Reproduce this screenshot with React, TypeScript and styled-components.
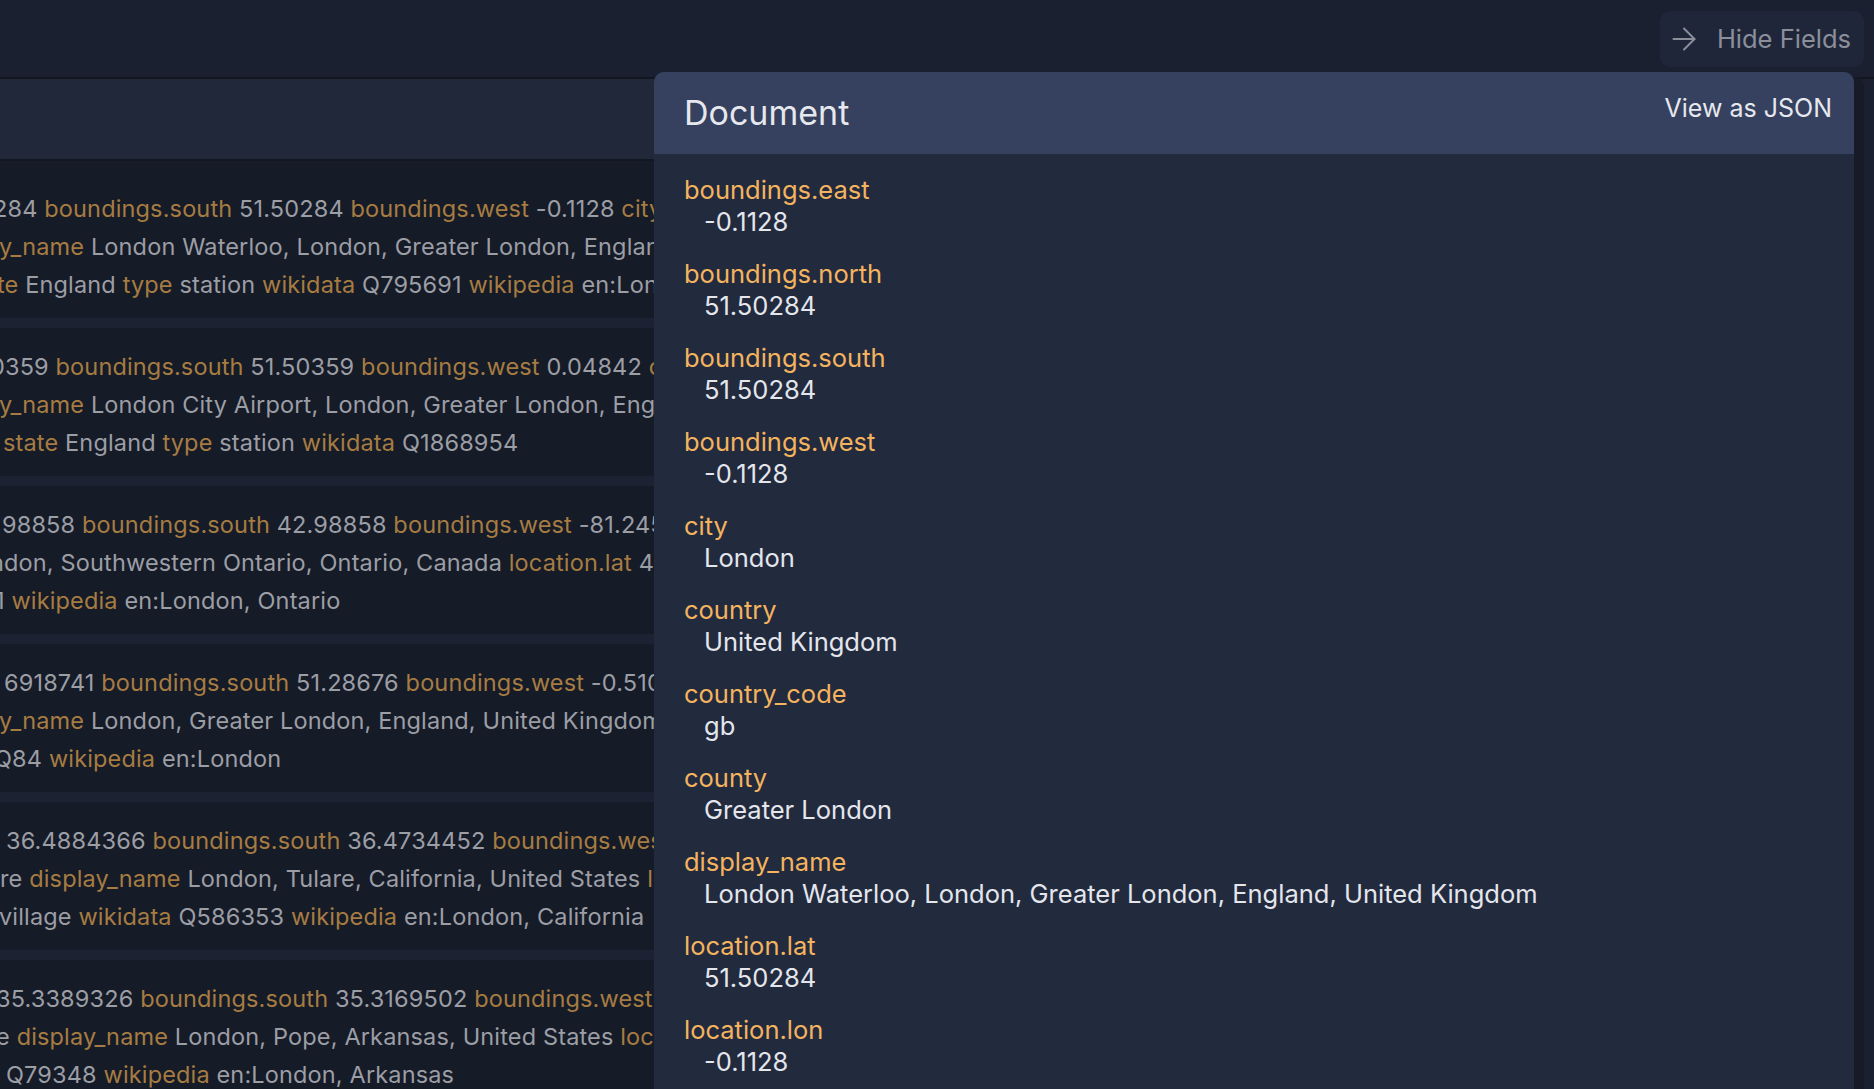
import React from 'react';
import styled, {createGlobalStyle} from 'styled-components';
import {ArrowRight} from 'lucide-react';

const GlobalStyle = createGlobalStyle`
    html, body {
        margin: 0;
        padding: 0;
        background: #1b2030;
        font-family: Inter, "Noto Sans", sans-serif;
        overflow: hidden;
    }
`;

const Page = styled.div`
    position: relative;
    display: flex;
    flex-direction: column;
    height: 100vh;
    overflow: hidden;
`;

const TopBar = styled.div`
    display: flex;
    align-items: center;
    justify-content: flex-end;
    height: 77px;
    padding-right: 10px;
    background: #1b2030;
    border-bottom: 2px solid #12161f;
    flex-shrink: 0;
`;

const HideButton = styled.button`
    display: flex;
    align-items: center;
    gap: 15px;
    height: 56px;
    padding: 0 13px 0 6px;
    background: #20263a;
    border: none;
    border-radius: 10px;
    color: #8b8f9a;
    font-family: inherit;
    font-size: 25.5px;
    cursor: pointer;
`;

const Results = styled.div`
    flex: 1;
    display: flex;
    flex-direction: column;
    min-height: 0;
    margin-right: 20px;
`;

const ResultsHeader = styled.div`
    height: 80px;
    background: #212839;
    border-bottom: 2px solid #131723;
    flex-shrink: 0;
`;

const List = styled.div`
    padding-top: 9px;
    background: #161b28;
`;

const Row = styled.div`
    padding: 20px 0 14px;
    border-bottom: 10px solid #1d2232;
    font-size: 23.5px;
    line-height: 38px;
    letter-spacing: 0.15px;
`;

const Line = styled.div<{$shift: number}>`
    white-space: nowrap;
    overflow: hidden;
    margin-left: ${p => p.$shift}px;
    color: #9c9ea5;
`;

const DimKey = styled.span`
    color: #a67c42;
`;

const Drawer = styled.aside`
    position: absolute;
    top: 72px;
    left: 654px;
    right: 20px;
    bottom: 0;
    display: flex;
    flex-direction: column;
    background: #222a3e;
    border-radius: 10px 10px 0 0;
    box-shadow: 10px 5px 0 #171b28;
`;

const DrawerHeader = styled.div`
    display: flex;
    align-items: flex-start;
    justify-content: space-between;
    flex-shrink: 0;
    height: 82px;
    box-sizing: border-box;
    padding: 19px 22px 0 30px;
    background: #35415f;
    border-radius: 10px 10px 0 0;
`;

const Title = styled.h2`
    margin: 0;
    font-size: 34px;
    font-weight: 400;
    line-height: 44px;
    color: #e6e8ee;
`;

const JsonLink = styled.a`
    margin-top: 1px;
    font-size: 25px;
    line-height: 32px;
    color: #e6e8ee;
    cursor: pointer;
`;

const DrawerBody = styled.div`
    display: flex;
    flex-direction: column;
    gap: 20px;
    padding: 20px 30px;
    overflow: hidden;
`;

const Field = styled.div`
    font-size: 25.5px;
    line-height: 32px;
    flex-shrink: 0;
`;

const FieldKey = styled.div`
    color: #f4b35f;
`;

const FieldValue = styled.div`
    padding-left: 20px;
    color: #e4e6ec;
`;

// keys in braces are highlighted; the number is how far the line is scrolled off the left edge
const rows: [string, number][][] = [
    [
        ['284 {boundings.south} 51.50284 {boundings.west} -0.1128 {city} London', -7],
        ['{y_name} London Waterloo, London, Greater London, England, United Kingdom', -1],
        ['{te} England {type} station {wikidata} Q795691 {wikipedia} en:London Waterloo station', -3],
    ],
    [
        ['0359 {boundings.south} 51.50359 {boundings.west} 0.04842 {city} London', -10],
        ['{y_name} London City Airport, London, Greater London, England, United Kingdom', -1],
        ['{state} England {type} station {wikidata} Q1868954', 3],
    ],
    [
        ['98858 {boundings.south} 42.98858 {boundings.west} -81.2452 {city} London', 2],
        ['ndon, Southwestern Ontario, Ontario, Canada {location.lat} 42.98858', -10],
        ['1 {wikipedia} en:London, Ontario', -5],
    ],
    [
        ['6918741 {boundings.south} 51.28676 {boundings.west} -0.5103751 {city} London', 4],
        ['{y_name} London, Greater London, England, United Kingdom', -1],
        ['Q84 {wikipedia} en:London', -6],
    ],
    [
        ['36.4884366 {boundings.south} 36.4734452 {boundings.west} -119.4540', 6],
        ['re {display_name} London, Tulare, California, United States {location.lat}', 0],
        ['village {wikidata} Q586353 {wikipedia} en:London, California', -1],
    ],
    [
        ['35.3389326 {boundings.south} 35.3169502 {boundings.west} -93.2631', -4],
        ['e {display_name} London, Pope, Arkansas, United States {location.lat}', -4],
        ['Q79348 {wikipedia} en:London, Arkansas', 6],
    ],
];

const fields: [string, string][] = [
    ['boundings.east', '-0.1128'],
    ['boundings.north', '51.50284'],
    ['boundings.south', '51.50284'],
    ['boundings.west', '-0.1128'],
    ['city', 'London'],
    ['country', 'United Kingdom'],
    ['country_code', 'gb'],
    ['county', 'Greater London'],
    ['display_name', 'London Waterloo, London, Greater London, England, United Kingdom'],
    ['location.lat', '51.50284'],
    ['location.lon', '-0.1128'],
    ['postcode', 'SE1 8SW'],
    ['state', 'England'],
    ['type', 'station'],
];

const renderLine = (text: string) =>
    text.split(/(\{[^}]+\})/).map((part, i) =>
        part.startsWith('{')
            ? <DimKey key={i}>{part.slice(1, -1)}</DimKey>
            : <React.Fragment key={i}>{part}</React.Fragment>
    );

export default function App() {
    return (
        <Page>
            <GlobalStyle/>
            <TopBar>
                <HideButton>
                    <ArrowRight size={36} strokeWidth={1.3}/>
                    Hide Fields
                </HideButton>
            </TopBar>
            <Results>
                <ResultsHeader/>
                <List>
                    {rows.map((lines, i) => (
                        <Row key={i}>
                            {lines.map(([text, shift], j) => (
                                <Line key={j} $shift={shift}>{renderLine(text)}</Line>
                            ))}
                        </Row>
                    ))}
                </List>
            </Results>
            <Drawer>
                <DrawerHeader>
                    <Title>Document</Title>
                    <JsonLink>View as JSON</JsonLink>
                </DrawerHeader>
                <DrawerBody>
                    {fields.map(([key, value]) => (
                        <Field key={key}>
                            <FieldKey>{key}</FieldKey>
                            <FieldValue>{value}</FieldValue>
                        </Field>
                    ))}
                </DrawerBody>
            </Drawer>
        </Page>
    );
}
